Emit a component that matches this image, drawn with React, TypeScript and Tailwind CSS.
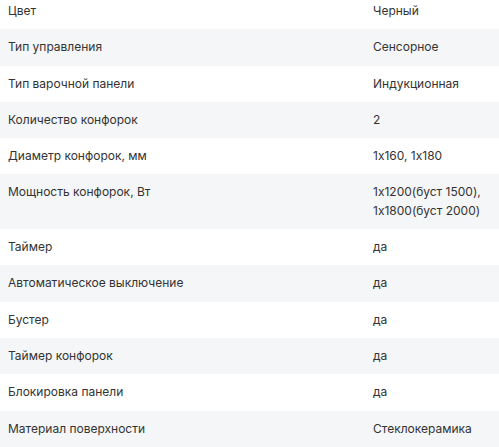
import React from "react";

const rows: [string, string[]][] = [
  ["Цвет", ["Черный"]],
  ["Тип управления", ["Сенсорное"]],
  ["Тип варочной панели", ["Индукционная"]],
  ["Количество конфорок", ["2"]],
  ["Диаметр конфорок, мм", ["1x160, 1x180"]],
  ["Мощность конфорок, Вт", ["1x1200(буст 1500),", "1x1800(буст 2000)"]],
  ["Таймер", ["да"]],
  ["Автоматическое выключение", ["да"]],
  ["Бустер", ["да"]],
  ["Таймер конфорок", ["да"]],
  ["Блокировка панели", ["да"]],
  ["Материал поверхности", ["Стеклокерамика"]],
];

export default function App() {
  return (
    <div className="w-[499px] h-[447px] overflow-hidden bg-white font-['Inter',sans-serif] text-[12px] text-[#333333] [font-feature-settings:'calt'_0]">
      <div className="-mt-[7px]">
        {rows.map(([k, v], i) => (
          <div
            key={k}
            className={`flex py-[9px] leading-[18.3px] ${i % 2 === 1 ? "bg-[#f5f6f8]" : "bg-white"}`}
          >
            <div className="pl-[8px] w-[373px] shrink-0">{k}</div>
            <div>
              {v.map((t) => (
                <div key={t}>{t}</div>
              ))}
            </div>
          </div>
        ))}
      </div>
    </div>
  );
}
